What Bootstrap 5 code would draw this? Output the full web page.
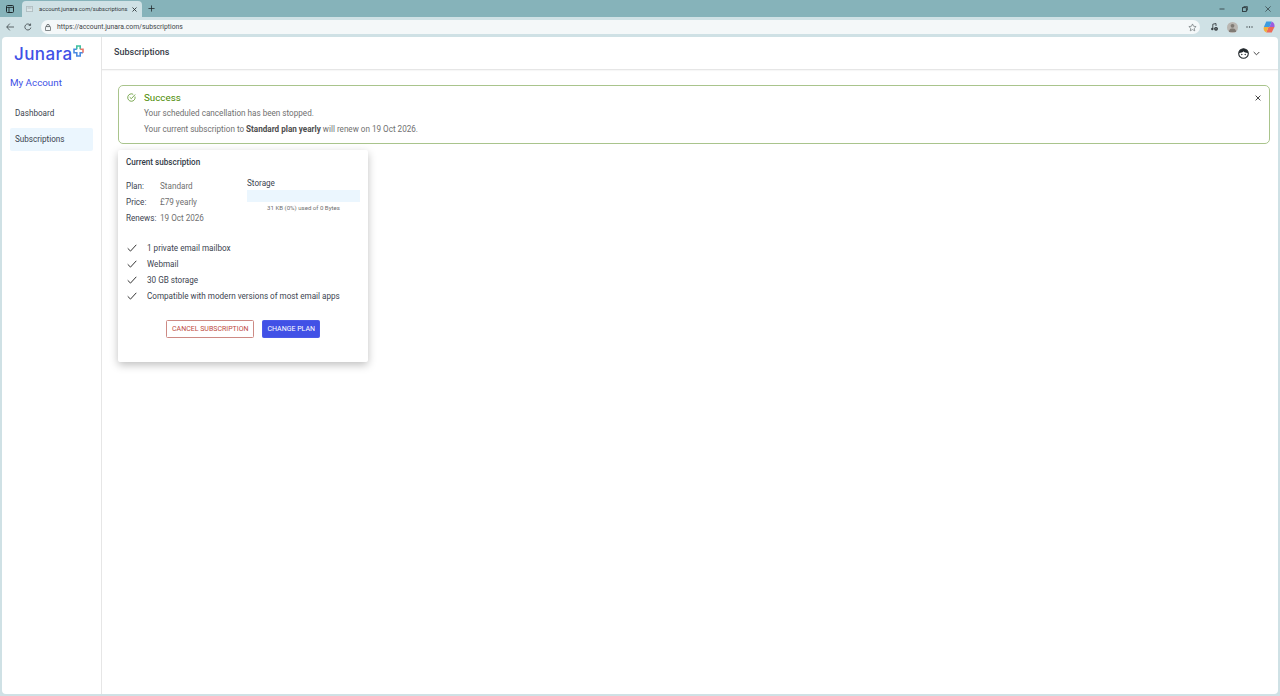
<!DOCTYPE html>
<html lang="en">
<head>
    <title>Subscriptions</title>
    <link href="https://cdn.jsdelivr.net/npm/bootstrap@5.3.0/dist/css/bootstrap.min.css" rel="stylesheet">
    <style>
        html, body { height: 100%; }
        body { background: #cfe1e5; font-family: Roboto, "Liberation Sans", sans-serif; font-size: 8.15px; color: #3c4450; overflow: hidden; }
        .shell { height: 696px; }
        svg { display: block; flex: none; }
        .tabbar { height: 17px; background: #86b3ba; padding-left: 6px; }
        .tabbox { width: 8px; height: 8px; }
        .tab { width: 120px; height: 16px; margin: 1px 0 0 8px; padding: 0 5px 0 4px; background: #cfe1e5; border-radius: 4px 4px 0 0; font-size: 5.8px; color: #33383c; }
        .tabname { margin-left: 6px; }
        .tabplus { margin-left: 6px; }
        .winbtns { gap: 17px; padding-right: 9px; }
        .toolbar { height: 20px; padding: 0 5px 0 6px; }
        .reload { margin-left: 10px; }
        .urlbar { width: 1159px; height: 14px; margin-left: 9px; padding: 0 3px 0 4px; background: #f4f8f9; border-radius: 7px; font-size: 6.8px; color: #3f4548; }
        .urltext { margin-left: 6px; }
        .tool-music { margin-left: 11px; }
        .avatar { width: 11px; height: 11px; margin-left: 9px; background: #b9b6b1; border-radius: 50%; }
        .tool-dots { margin-left: 8px; }
        .tool-copilot { margin-left: 10px; }
        .page { height: 657px; margin: 0 2px 2px 2px; background: #fff; border-radius: 4px; overflow: hidden; }
        .side { width: 100px; border-right: 1px solid #e6e6e6; padding: 8px 8px 0 8px; }
        .logo-name { font-family: Inter, Roboto, sans-serif; font-size: 17px; font-weight: 500; line-height: 18px; letter-spacing: .4px; color: #4151e6; margin-left: 4px; }
        .logo-mark { margin-left: 1px; }
        .acct { font-size: 9.8px; line-height: 14px; color: #4151e6; margin-top: 13px; }
        .sidenav { margin-top: 12px; }
        .sidelink { display: block; height: 23px; line-height: 23px; padding-left: 5px; margin-bottom: 3px; color: #3c4450; text-decoration: none; border-radius: 2px; }
        .sidelink.on { background: #ebf6fe; }
        .topbar { height: 33px; padding: 0 18px 0 12px; border-bottom: 1px solid #e6e6e6; box-shadow: 0 1px 1px rgba(0,0,0,.03); }
        .topbar-title { font-size: 9px; font-weight: 500; color: #3a404a; }
        .content { padding: 15px 8px 0 16px; }
        .okbox { height: 59px; border: 1px solid #a9c48c; border-radius: 5px; padding: 6px 8px 0 8px; }
        .okicon { margin-top: 1px; }
        .oktitle { font-size: 9.8px; line-height: 12px; margin-bottom: 1px; color: #4a8a00; }
        .okline { line-height: 16px; color: #6f6f6f; }
        .okline b { color: #4d4d4d; font-weight: 700; }
        .okclose { margin-top: 3px; }
        .subcard { width: 250px; height: 212px; margin-top: 6px; padding: 7px 8px; background: #fff; border-radius: 2px; box-shadow: 0 3px 9px rgba(0,0,0,.25); }
        .subtitle { font-weight: 500; line-height: 10px; color: #333b47; }
        .plan { width: 121px; padding-top: 11px; }
        .planrow { line-height: 16px; height: 16px; }
        .planrow span:first-child { width: 34px; }
        .planrow span:last-child { color: #6f6f6f; }
        .store { width: 113px; padding-top: 11px; }
        .storelabel { line-height: 10px; }
        .storebar { height: 12px; margin-top: 2px; background: #ebf6fe; }
        .storenote { font-size: 6.1px; line-height: 8px; margin-top: 2px; color: #6f6f6f; text-align: center; }
        .feats { margin-top: 14px; }
        .feat { height: 16px; line-height: 16px; gap: 10px; padding-left: 1px; }
        .btnrow { gap: 8px; margin-top: 16px; }
        .planbtn { height: 18px; padding: 0 5px; font-size: 7px; line-height: 16px; border-radius: 1.5px; --bs-btn-font-size: 7px; }
        .btn-stop { background: #fff; border: 1px solid #cd8a84; color: #bd4a42; }
        .btn-go { padding: 0 4px; background: #4151e6; border: 1px solid #4b5ae8; color: #fff; }
    </style>
</head>
<body>
<div class="shell d-flex flex-column">
    <div class="tabbar d-flex align-items-center">
        <svg class="tabbox" viewBox="0 0 8 8"><rect x=".5" y=".5" width="7" height="7" rx="1" fill="none" stroke="#1f2a2e"/><path d="M.5 2.400h7M3 2.400v5" stroke="#1f2a2e" fill="none" stroke-width=".9"/></svg>
        <div class="tab d-flex align-items-center">
            <svg width="7" height="6" viewBox="0 0 7 6"><rect x=".3" y=".3" width="6.400" height="5.400" rx=".8" fill="#dbe6e9" stroke="#8d9a9e" stroke-width=".6"/><path d="M1.500 2h4" stroke="#8d9a9e" stroke-width=".6"/></svg>
            <span class="tabname flex-grow-1 text-nowrap">account.junara.com/subscriptions</span>
            <svg width="5" height="5" viewBox="0 0 6 6"><path d="M.6.6l4.800 4.800M5.400.6L.6 5.400" stroke="#22292c"/></svg>
        </div>
        <svg class="tabplus" width="7" height="7" viewBox="0 0 8 8"><path d="M4 .5v7M.5 4h7" stroke="#22292c" stroke-width=".9"/></svg>
        <div class="winbtns d-flex align-items-center ms-auto">
            <svg width="6" height="6" viewBox="0 0 6 6"><path d="M.5 3h5" stroke="#22292c" stroke-width=".7"/></svg>
            <svg width="6" height="6" viewBox="0 0 6 6"><rect x=".5" y="1.700" width="3.800" height="3.800" fill="none" stroke="#22292c" stroke-width=".8"/><path d="M1.800 1.700V.6h3.600v3.600H4.300" fill="none" stroke="#22292c" stroke-width=".7"/></svg>
            <svg width="6" height="6" viewBox="0 0 6 6"><path d="M.4.4l5.200 5.200M5.600.4L.4 5.600" stroke="#22292c" stroke-width=".6"/></svg>
        </div>
    </div>
    <div class="toolbar d-flex align-items-center">
        <svg width="8" height="8" viewBox="0 0 8 8"><path d="M3.800.6L.7 4l3.100 3.400M.8 4H8" fill="none" stroke="#2a3235" stroke-width=".7"/></svg>
        <svg class="reload" width="8" height="8" viewBox="0 0 9 9"><path d="M7.700 5.200A3.400 3.400 0 1 1 7 2.300M7.400.6v2.100H5.300" fill="none" stroke="#2a3235" stroke-width=".8"/></svg>
        <div class="urlbar d-flex align-items-center">
            <svg width="6" height="7" viewBox="0 0 6 7"><rect x=".4" y="2.600" width="5.200" height="4" rx=".7" fill="none" stroke="#3f4548" stroke-width=".7"/><path d="M1.600 2.600V1.800a1.400 1.400 0 0 1 2.800 0v.8" fill="none" stroke="#3f4548" stroke-width=".7"/></svg>
            <span class="urltext">https://account.junara.com/subscriptions</span>
            <svg class="ms-auto" width="9" height="9" viewBox="0 0 24 24"><path d="M12 2.500l2.900 6.200 6.800.8-5 4.700 1.300 6.700-6-3.400-6 3.400 1.300-6.700-5-4.700 6.800-.8z" fill="none" stroke="#6a7275" stroke-width="1.800"/></svg>
        </div>
        <svg class="tool-music" width="7" height="8" viewBox="0 0 7 8"><path d="M1.800 5.800V1.200L5 .5v2.500" fill="none" stroke="#3a4245" stroke-width=".9"/><circle cx="1.300" cy="6" r="1.200" fill="#3a4245"/><circle cx="5" cy="5.800" r="1.900" fill="#2a3033"/><circle cx="5" cy="5.800" r=".6" fill="#cfe1e5"/></svg>
        <div class="avatar d-flex align-items-center justify-content-center">
            <svg width="7" height="9" viewBox="0 0 7 9"><circle cx="3.500" cy="2.800" r="1.900" fill="#7f7a74"/><path d="M0 9c0-3 1.500-3.600 3.500-3.600S7 6 7 9z" fill="#7f7a74"/></svg>
        </div>
        <svg class="tool-dots" width="7" height="2" viewBox="0 0 7 2"><circle cx="1" cy="1" r=".7" fill="#3a4245"/><circle cx="3.500" cy="1" r=".7" fill="#3a4245"/><circle cx="6" cy="1" r=".7" fill="#3a4245"/></svg>
        <svg class="tool-copilot" width="12" height="12" viewBox="0 0 11 11"><path d="M3 .5h5L6 5.500H.8z" fill="#3d9be0"/><path d="M8 .5c2 1 3 3 2.500 5H6z" fill="#9a5de0"/><path d="M10.500 5.500L8 10.500H3L5 5.500z" fill="#ee6a5a"/><path d="M.8 5.500H5L3 10.500C1 9.500 0 7.500.8 5.500z" fill="#f0b03c"/></svg>
    </div>
    <div class="page d-flex">
        <div class="side flex-shrink-0">
            <div class="d-flex align-items-start">
                <div class="logo-name">Junara</div>
                <svg class="logo-mark" width="11" height="12" viewBox="0 0 11 12"><path d="M10 7.800H7.200V11H3.800V7.800H1V4.300h2.800" fill="none" stroke="#4a8be0" stroke-width="1.600"/><path d="M3.800 4.300V1h3.400v3.300" fill="none" stroke="#3fc0a0" stroke-width="1.600"/><path d="M7.200 4.300H10v3.500" fill="none" stroke="#e8766a" stroke-width="1.600"/></svg>
            </div>
            <div class="acct">My Account</div>
            <div class="sidenav">
                <a class="sidelink" href="#">Dashboard</a>
                <a class="sidelink on" href="#">Subscriptions</a>
            </div>
        </div>
        <div class="flex-grow-1">
            <div class="topbar d-flex align-items-center justify-content-between">
                <span class="topbar-title">Subscriptions</span>
                <div class="d-flex align-items-center gap-1">
                    <svg width="11" height="11" viewBox="0 0 11 11"><circle cx="5.500" cy="5.500" r="4.800" fill="#fff" stroke="#22282c" stroke-width="1.100"/><path d="M.8 5.200C1.500 2 3.500.8 5.500.8s4 1.200 4.700 4.400C8 4.600 6 4.400 5.500 3.300 5 4.400 3 4.600.8 5.200z" fill="#22282c"/><circle cx="3.800" cy="6.500" r=".7" fill="#22282c"/><circle cx="7.200" cy="6.500" r=".7" fill="#22282c"/></svg>
                    <svg width="7" height="5" viewBox="0 0 7 5"><path d="M.7 1l2.800 2.800L6.300 1" fill="none" stroke="#444" stroke-width="1"/></svg>
                </div>
            </div>
            <div class="content">
                <div class="okbox d-flex">
                    <svg class="okicon" width="9" height="9" viewBox="0 0 9 9"><path d="M8 3.600A3.700 3.700 0 1 1 6.200 1.300" fill="none" stroke="#5b9328" stroke-width=".8"/><path d="M2.700 4.200l1.600 1.500L8.200 1.500" fill="none" stroke="#5b9328" stroke-width=".8"/></svg>
                    <div class="ms-2 flex-grow-1">
                        <div class="oktitle">Success</div>
                        <div class="okline">Your scheduled cancellation has been stopped.</div>
                        <div class="okline">Your current subscription to <b>Standard plan yearly</b> will renew on 19 Oct 2026.</div>
                    </div>
                    <svg class="okclose" width="6" height="6" viewBox="0 0 6 6"><path d="M.6.6l4.800 4.800M5.400.6L.6 5.400" stroke="#333" stroke-width=".9"/></svg>
                </div>
                <div class="subcard">
                    <div class="subtitle">Current subscription</div>
                    <div class="d-flex">
                        <div class="plan">
                            <div class="planrow d-flex"><span>Plan:</span><span>Standard</span></div>
                            <div class="planrow d-flex"><span>Price:</span><span>£79 yearly</span></div>
                            <div class="planrow d-flex"><span>Renews:</span><span>19 Oct 2026</span></div>
                        </div>
                        <div class="store">
                            <div class="storelabel">Storage</div>
                            <div class="storebar"></div>
                            <div class="storenote">31 KB (0%) used of 0 Bytes</div>
                        </div>
                    </div>
                    <div class="feats">
                        <div class="feat d-flex align-items-center"><svg width="10" height="8" viewBox="0 0 10 8"><path d="M.7 4.300l2.800 2.800L9.300.8" fill="none" stroke="#333" stroke-width="1"/></svg><span>1 private email mailbox</span></div>
                        <div class="feat d-flex align-items-center"><svg width="10" height="8" viewBox="0 0 10 8"><path d="M.7 4.300l2.800 2.800L9.300.8" fill="none" stroke="#333" stroke-width="1"/></svg><span>Webmail</span></div>
                        <div class="feat d-flex align-items-center"><svg width="10" height="8" viewBox="0 0 10 8"><path d="M.7 4.300l2.800 2.800L9.300.8" fill="none" stroke="#333" stroke-width="1"/></svg><span>30 GB storage</span></div>
                        <div class="feat d-flex align-items-center"><svg width="10" height="8" viewBox="0 0 10 8"><path d="M.7 4.300l2.800 2.800L9.300.8" fill="none" stroke="#333" stroke-width="1"/></svg><span>Compatible with modern versions of most email apps</span></div>
                    </div>
                    <div class="btnrow d-flex justify-content-center">
                        <button class="btn planbtn btn-stop" type="button">CANCEL SUBSCRIPTION</button>
                        <button class="btn planbtn btn-go" type="button">CHANGE PLAN</button>
                    </div>
                </div>
            </div>
        </div>
    </div>
</div>
<script src="https://cdn.jsdelivr.net/npm/bootstrap@5.3.0/dist/js/bootstrap.bundle.min.js"></script>
</body>
</html>
